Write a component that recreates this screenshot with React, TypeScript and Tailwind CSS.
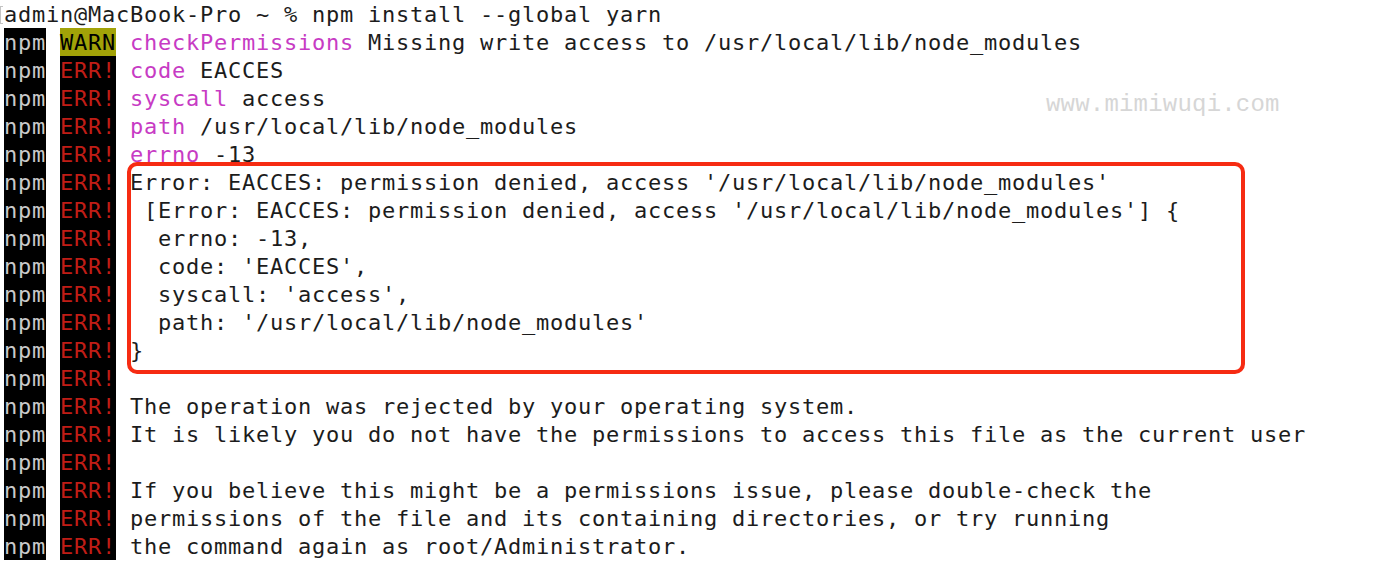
import { FC, ReactNode } from "react";

type LineType = {
  tag?: "WARN" | "ERR!";
  children?: ReactNode;
};

const Line: FC<LineType> = ({ tag, children }) => {
  return (
    <div className="flex flex-row h-[28px] items-stretch whitespace-pre">
      <span className="bg-black text-[#c9c9c9] flex items-center pt-[1px]">npm</span>
      <span> </span>
      {tag === "WARN" ? (
        <span className="bg-[#a2a208] text-black flex items-center pt-[1px]">WARN</span>
      ) : (
        <span className="bg-black text-[#c01d16] flex items-center pt-[1px]">ERR!</span>
      )}
      <span> </span>
      <span className="flex items-center pt-[1px]">{children}</span>
    </div>
  );
};

const Key: FC<{ children: ReactNode }> = ({ children }) => (
  <span className="text-[#c73bc4]">{children}</span>
);

const App: FC = () => {
  return (
    <div className="relative w-[1392px] h-[570px] bg-white overflow-hidden">
      <div
        className="pl-[4px] text-[22px] tracking-[0.755px] leading-[28px] text-[#1c1c1c]"
        style={{ fontFamily: '"DejaVu Sans Mono", "Liberation Mono", monospace' }}
      >
        <div className="flex flex-row h-[28px] items-center whitespace-pre pt-[1px]">
          <span className="ml-[-4px] mr-[1px] w-[3px] h-[18px] border-l border-y border-[#c4c4c4]"></span>
          <span>admin@MacBook-Pro ~ % npm install --global yarn</span>
        </div>
        <Line tag="WARN">
          <Key>checkPermissions</Key> Missing write access to /usr/local/lib/node_modules
        </Line>
        <Line tag="ERR!">
          <Key>code</Key> EACCES
        </Line>
        <Line tag="ERR!">
          <Key>syscall</Key> access
        </Line>
        <Line tag="ERR!">
          <Key>path</Key> /usr/local/lib/node_modules
        </Line>
        <Line tag="ERR!">
          <Key>errno</Key> -13
        </Line>
        <Line tag="ERR!">Error: EACCES: permission denied, access '/usr/local/lib/node_modules'</Line>
        <Line tag="ERR!"> [Error: EACCES: permission denied, access '/usr/local/lib/node_modules'] {"{"}</Line>
        <Line tag="ERR!">  errno: -13,</Line>
        <Line tag="ERR!">  code: 'EACCES',</Line>
        <Line tag="ERR!">  syscall: 'access',</Line>
        <Line tag="ERR!">  path: '/usr/local/lib/node_modules'</Line>
        <Line tag="ERR!">{"}"}</Line>
        <Line tag="ERR!" />
        <Line tag="ERR!">The operation was rejected by your operating system.</Line>
        <Line tag="ERR!">It is likely you do not have the permissions to access this file as the current user</Line>
        <Line tag="ERR!" />
        <Line tag="ERR!">If you believe this might be a permissions issue, please double-check the</Line>
        <Line tag="ERR!">permissions of the file and its containing directories, or try running</Line>
        <Line tag="ERR!">the command again as root/Administrator.</Line>
      </div>

      {/* highlight box */}
      <div className="absolute left-[127px] top-[162px] w-[1118px] h-[212px] border-4 border-[#f62b12] rounded-[10px]"></div>

      {/* watermark */}
      <div
        className="absolute left-[1046px] top-[91px] text-[24px] leading-[28px] text-[#d6d6d6] tracking-[0.2px] whitespace-pre"
        style={{ fontFamily: '"Liberation Mono", monospace' }}
      >
        www.mimiwuqi.com
      </div>
    </div>
  );
};

export default App;
